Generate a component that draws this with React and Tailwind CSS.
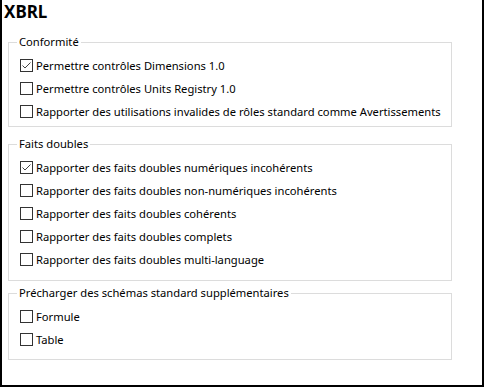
import React from "react";

const font = { fontFamily: '"Noto Sans", "Open Sans", sans-serif' };

function Check({ checked }) {
  return (
    <span className="w-[13px] h-[13px] border border-[#333333] bg-white flex items-center justify-center shrink-0">
      {checked && (
        <svg width="11" height="11" viewBox="0 0 11 11">
          <polyline points="1.5,5.5 4,8 9.5,2.5" fill="none" stroke="#444444" strokeWidth="1" />
        </svg>
      )}
    </span>
  );
}

function Row({ label, checked }) {
  return (
    <div className="h-[23px] flex items-center pl-[11px]">
      <Check checked={checked} />
      <span className="ml-[3px] text-[11.2px] leading-[16px] text-black whitespace-nowrap">{label}</span>
    </div>
  );
}

function Group({ title, rows, className }) {
  return (
    <fieldset className={"mx-[6px] w-[444px] min-w-0 border border-[#dcdcdc] " + className}>
      <legend className="ml-[8px] px-[2px] text-[11.2px] leading-[16px] text-black">{title}</legend>
      <div className="pt-[4px]">
        {rows.map((r) => (
          <Row key={r[0]} label={r[0]} checked={r[1]} />
        ))}
      </div>
    </fieldset>
  );
}

export default function App() {
  return (
    <div className="w-[484px] h-[387px] bg-white border-l-2 border-r-2 border-b-2 border-black box-border" style={font}>
      <div className="pt-[2px] pl-[2px] text-[17px] leading-[20px] font-bold text-black">XBRL</div>
      <Group
        className="mt-[12px] pb-[3px]"
        title="Conformité"
        rows={[
          ["Permettre contrôles Dimensions 1.0", true],
          ["Permettre contrôles Units Registry 1.0", false],
          ["Rapporter des utilisations invalides de rôles standard comme Avertissements", false],
        ]}
      />
      <Group
        className="mt-[9px] pb-[9px]"
        title="Faits doubles"
        rows={[
          ["Rapporter des faits doubles numériques incohérents", true],
          ["Rapporter des faits doubles non-numériques incohérents", false],
          ["Rapporter des faits doubles cohérents", false],
          ["Rapporter des faits doubles complets", false],
          ["Rapporter des faits doubles multi-language", false],
        ]}
      />
      <Group
        className="mt-[4px] pb-[8px]"
        title="Précharger des schémas standard supplémentaires"
        rows={[
          ["Formule", false],
          ["Table", false],
        ]}
      />
    </div>
  );
}
